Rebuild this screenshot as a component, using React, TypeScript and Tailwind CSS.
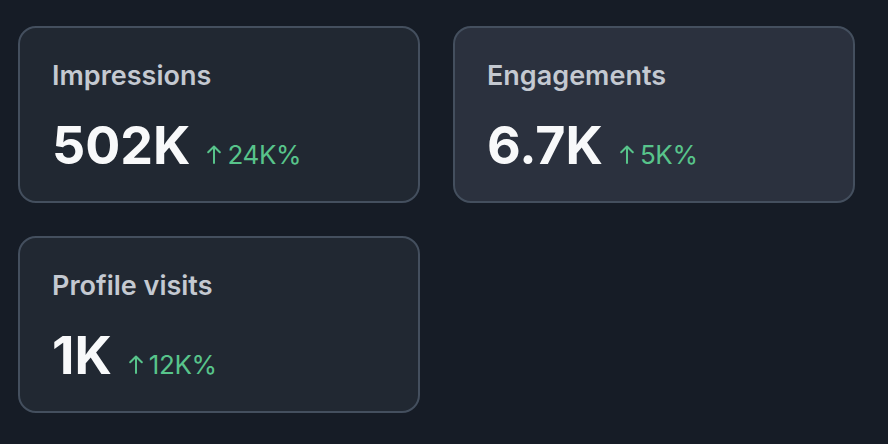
type Stat = {
  label: string;
  value: string;
  delta: string;
  active?: boolean;
};

const stats: Stat[] = [
  { label: "Impressions", value: "502K", delta: "24K%" },
  { label: "Engagements", value: "6.7K", delta: "5K%", active: true },
  { label: "Profile visits", value: "1K", delta: "12K%" },
];

function UpArrow() {
  return (
    <svg
      viewBox="0 0 14 19"
      className="h-[19px] w-[14px] shrink-0"
      fill="none"
      stroke="currentColor"
      strokeWidth={2}
      strokeLinecap="round"
      strokeLinejoin="round"
    >
      <path d="M7 18V1.5M1.2 7.3L7 1.5l5.8 5.8" />
    </svg>
  );
}

function StatCard({ stat }: { stat: Stat }) {
  return (
    <div
      className={`flex h-[177px] flex-col rounded-[18px] border-2 border-[#444f5e] px-[32px] pt-[32px] ${
        stat.active ? "bg-[#2b313e]" : "bg-[#212832]"
      }`}
    >
      <p className="text-[27px] font-semibold leading-[32px] text-[#c4c9d1]">{stat.label}</p>
      <div className="mt-[24px] flex items-baseline">
        <span className="text-[52px] font-bold leading-[60px] text-[#f8f9fa]">{stat.value}</span>
        <span className="ml-[17px] flex items-baseline gap-[6px] text-[26px] leading-[30px] tracking-[-0.4px] text-[#58c48b]">
          <UpArrow />
          {stat.delta}
        </span>
      </div>
    </div>
  );
}

export default function App() {
  return (
    <div
      className="h-[444px] w-[888px] bg-[#161c26] pl-[18px] pt-[26px]"
      style={{ fontFamily: "Inter, 'Noto Sans', sans-serif" }}
    >
      <div className="grid grid-cols-[402px_402px] gap-[33px]">
        {stats.map((s) => (
          <StatCard key={s.label} stat={s} />
        ))}
      </div>
    </div>
  );
}
